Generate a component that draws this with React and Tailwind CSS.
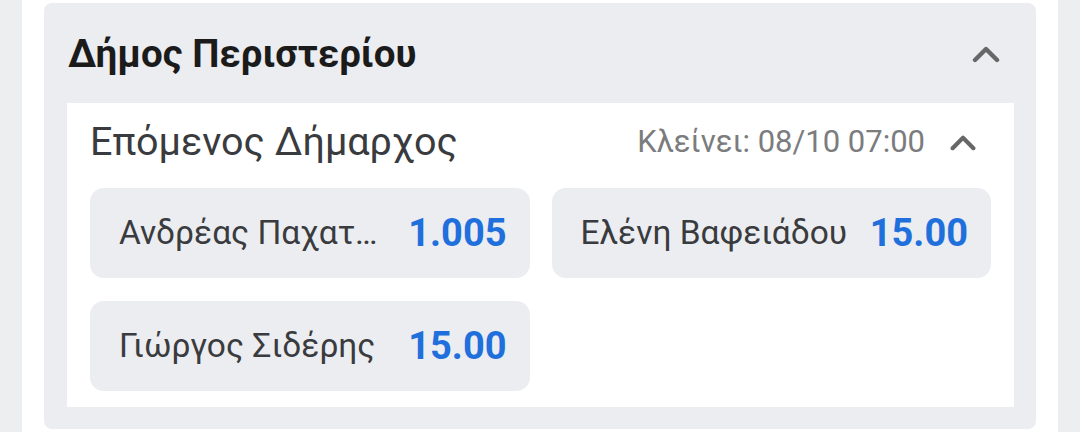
import React from "react";

function Chevron({ className }) {
  return (
    <svg viewBox="0 0 28 18" className={className} fill="none">
      <polyline points="3,15 14,4 25,15" stroke="#676767" strokeWidth="4.4" strokeLinecap="round" strokeLinejoin="round" />
    </svg>
  );
}

function Odd({ name, price }) {
  return (
    <div className="flex h-[90px] items-center justify-between gap-[18px] rounded-[14px] bg-[#ebedf0] pl-[29px] pr-[23px]">
      <span className="min-w-0 truncate text-[33.5px] text-[#3a3b3e]">{name}</span>
      <span className="shrink-0 text-[38px] font-bold text-[#1f6fdc]">{price}</span>
    </div>
  );
}

export default function App() {
  return (
    <div className="flex h-[432px] w-[1080px] bg-white font-['Roboto',sans-serif]">
      <div className="w-[22px] shrink-0 bg-[#eceef0]" />
      <div className="w-[22px] shrink-0" />
      <div className="flex-1 pt-[3px]">
        <div className="flex h-[426px] flex-col rounded-[8px] bg-[#ebedf0] pb-[22px] pl-[23px] pr-[22px]">
          <div className="flex h-[100px] shrink-0 items-center justify-between pl-[1px] pr-[14px] pt-[2px]">
            <span className="text-[38.5px] font-bold text-[#1b1b1c]">Δήμος Περιστερίου</span>
            <Chevron className="h-[18px] w-[28px]" />
          </div>
          <div className="flex-1 bg-white px-[23px]">
            <div className="flex h-[78px] items-center justify-between pr-[14px]">
              <span className="text-[39.5px] text-[#3a3b3e]">Επόμενος Δήμαρχος</span>
              <div className="flex items-center gap-[24px]">
                <span className="text-[31px] text-[#7b7c7e]">Κλείνει: 08/10 07:00</span>
                <Chevron className="h-[17px] w-[28px]" />
              </div>
            </div>
            <div className="mt-[7px] grid grid-cols-2 gap-x-[22px] gap-y-[23px]">
              <Odd name="Ανδρέας Παχατουρίδης" price="1.005" />
              <Odd name="Ελένη Βαφειάδου" price="15.00" />
              <Odd name="Γιώργος Σιδέρης" price="15.00" />
            </div>
          </div>
        </div>
      </div>
      <div className="w-[22px] shrink-0" />
      <div className="w-[22px] shrink-0 bg-[#eceef0]" />
    </div>
  );
}
